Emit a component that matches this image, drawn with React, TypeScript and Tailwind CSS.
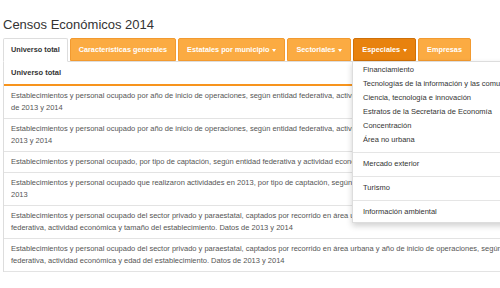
import React from 'react';

interface Tab {
  label: string;
  caret?: boolean;
  kind: 'active' | 'light' | 'dark';
}

const tabs: Tab[] = [
  { label: 'Universo total', kind: 'active' },
  { label: 'Características generales', kind: 'light' },
  { label: 'Estatales por municipio', caret: true, kind: 'light' },
  { label: 'Sectoriales', caret: true, kind: 'light' },
  { label: 'Especiales', caret: true, kind: 'dark' },
  { label: 'Empresas', kind: 'light' },
];

// each row is split into lines by hand, as they wrap in the original
const rows: string[][] = [
  [
    'Establecimientos y personal ocupado por año de inicio de operaciones, según entidad federativa, actividad económica y tamaño del establecimiento. Datos',
    'de 2013 y 2014',
  ],
  [
    'Establecimientos y personal ocupado por año de inicio de operaciones, según entidad federativa, actividad económica y edad del establecimiento. Datos de',
    '2013 y 2014',
  ],
  ['Establecimientos y personal ocupado, por tipo de captación, según entidad federativa y actividad económica. Datos de 2013'],
  [
    'Establecimientos y personal ocupado que realizaron actividades en 2013, por tipo de captación, según entidad federativa y actividad económica. Datos de',
    '2013',
  ],
  [
    'Establecimientos y personal ocupado del sector privado y paraestatal, captados por recorrido en área urbana y año de inicio de operaciones, según entidad',
    'federativa, actividad económica y tamaño del establecimiento. Datos de 2013 y 2014',
  ],
  [
    'Establecimientos y personal ocupado del sector privado y paraestatal, captados por recorrido en área urbana y año de inicio de operaciones, según entidad',
    'federativa, actividad económica y edad del establecimiento. Datos de 2013 y 2014',
  ],
];

const menuTop = [
  'Financiamiento',
  'Tecnologías de la información y las comunicaciones',
  'Ciencia, tecnología e innovación',
  'Estratos de la Secretaría de Economía',
  'Concentración',
  'Área no urbana',
];
const menuBottom = ['Mercado exterior', 'Turismo', 'Información ambiental'];

const Caret = () => (
  <span className="inline-block ml-[3px] align-middle w-0 h-0 border-l-[2.5px] border-r-[2.5px] border-t-[3px] border-l-transparent border-r-transparent border-t-white" />
);

const TabItem: React.FC<{ tab: Tab }> = ({ tab }) => {
  const base = 'h-[23px] leading-[21px] text-[7.3px] font-bold whitespace-nowrap rounded-t-[2px] border';
  if (tab.kind === 'active') {
    return (
      <div className={`${base} bg-white text-[#333] border-[#ddd] border-b-white -mb-px h-[24px] px-[7px]`}>
        {tab.label}
      </div>
    );
  }
  const color =
    tab.kind === 'dark'
      ? 'bg-[#e8820e] border-[#cf7008] text-white'
      : 'bg-[#fbab42] border-[#f29a30] text-white';
  return (
    <div className={`${base} ${color} px-[8px]`}>
      {tab.label}
      {tab.caret && <Caret />}
    </div>
  );
};

const Dropdown = () => (
  <div className="absolute left-[349px] top-full w-[210px] bg-white border border-[#ddd] shadow-[0_3px_6px_rgba(0,0,0,0.18)] pt-[1px] pb-[3px] text-[#333] z-10">
    {menuTop.map((item) => (
      <div key={item} className="px-[10px] leading-[14px] whitespace-nowrap">
        {item}
      </div>
    ))}
    {menuBottom.map((item) => (
      <React.Fragment key={item}>
        <div className="h-px bg-[#e5e5e5] mt-[5px] mb-[4px]" />
        <div className="px-[10px] leading-[14px] whitespace-nowrap">{item}</div>
      </React.Fragment>
    ))}
  </div>
);

export default function App() {
  return (
    <div className="w-[500px] h-[288px] overflow-hidden bg-white font-['Liberation_Sans',Arial,sans-serif] text-[7.5px]">
      <div className="w-[680px] pl-[3px]">
        <h1 className="text-[13px] leading-[16px] text-[#333] pt-[17px] pb-[5px]">Censos Económicos 2014</h1>

        <div className="relative flex items-end gap-[2px] border-b border-[#ddd]">
          {tabs.map((t) => (
            <TabItem key={t.label} tab={t} />
          ))}
          <Dropdown />
        </div>

        <div className="border-l border-[#ddd]">
          <div className="pl-[7px] pt-[5px] pb-[5px] leading-[12px] font-bold text-[#333] border-b-2 border-[#f7941d]">
            Universo total
          </div>
          {rows.map((lines, i) => (
            <div key={i} className="pl-[7px] py-1 leading-[12px] text-[#555] border-b border-[#e3e3e3]">
              {lines.map((l, j) => (
                <div key={j} className="whitespace-nowrap">
                  {l}
                </div>
              ))}
            </div>
          ))}
        </div>
      </div>
    </div>
  );
}
